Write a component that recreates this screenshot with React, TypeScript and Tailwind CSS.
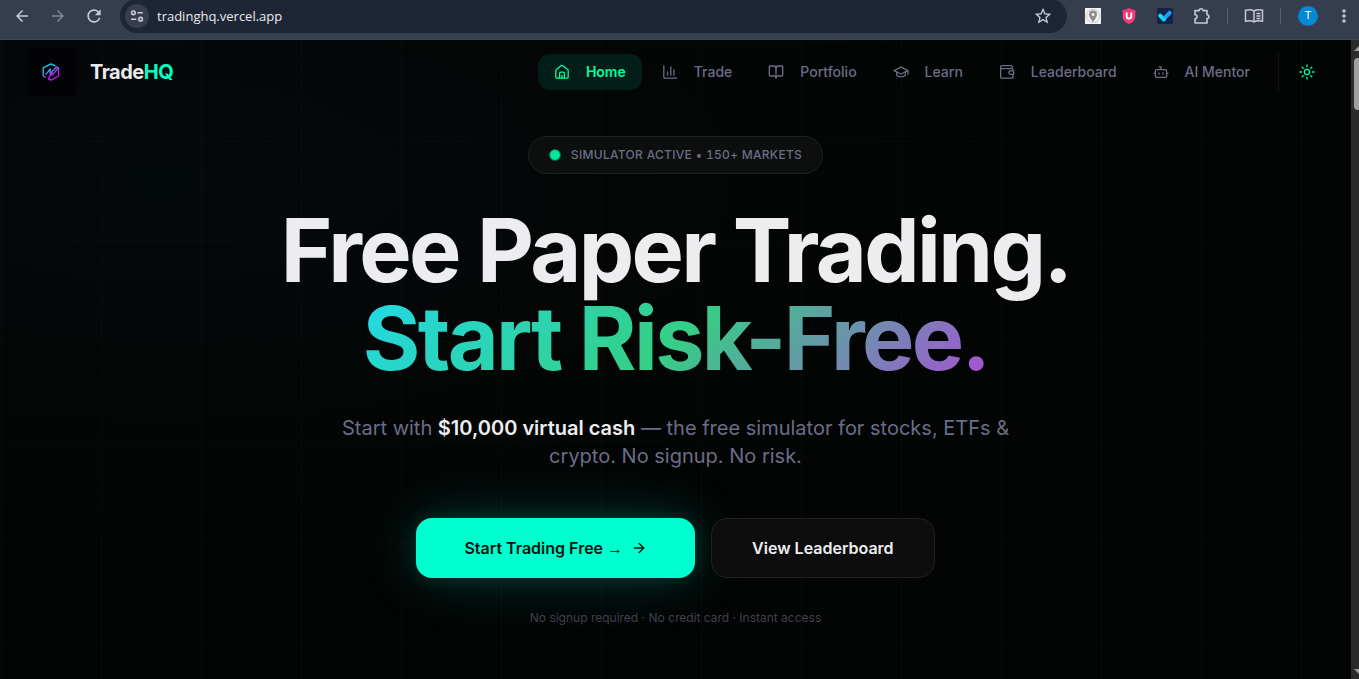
import React from 'react';
import { ArrowRight, BookOpen } from 'lucide-react';
import { MdArrowBack, MdArrowForward, MdMoreVert, MdRefresh, MdStarBorder } from 'react-icons/md';

type IconProps = { children: React.ReactNode };

function NavIcon({ children }: IconProps) {
  return (
    <svg
      viewBox="0 0 16 16"
      className="w-4 h-4 shrink-0"
      fill="none"
      stroke="currentColor"
      strokeWidth="1.3"
      strokeLinecap="round"
      strokeLinejoin="round"
    >
      {children}
    </svg>
  );
}

const navItems = [
  {
    label: 'Home',
    active: true,
    icon: (
      <NavIcon>
        <path d="M1.8 6.6a1.6 1.6 0 0 1 .6-1.2L7 1.8a1.6 1.6 0 0 1 2 0l4.6 3.6a1.6 1.6 0 0 1 .6 1.2V13a1.2 1.2 0 0 1-1.2 1.2H3A1.2 1.2 0 0 1 1.8 13Z" />
        <path d="M5.6 14V9.6A1.4 1.4 0 0 1 7 8.2h2a1.4 1.4 0 0 1 1.4 1.4V14M8 11.4V14" />
      </NavIcon>
    ),
  },
  {
    label: 'Trade',
    icon: (
      <NavIcon>
        <path d="M1.8 1.8v11a1.4 1.4 0 0 0 1.4 1.4h11.4" />
        <path d="M5.6 11.2V7.8M8.8 11.2V3M12 11.2V6" />
      </NavIcon>
    ),
  },
  { label: 'Portfolio', icon: <BookOpen className="w-4 h-4 shrink-0" strokeWidth={2} /> },
  {
    label: 'Learn',
    icon: (
      <NavIcon>
        <path d="M8 3.2 1 6.6 8 10l7-3.4Z" />
        <path d="M3.6 8v3.2c1.8 2.2 7 2.2 8.8 0V8M15 6.8v3.4" />
      </NavIcon>
    ),
  },
  {
    label: 'Leaderboard',
    icon: (
      <NavIcon>
        <path d="M13.2 4.6V2.8a1.2 1.2 0 0 0-1.2-1.2H2.8a1.2 1.2 0 0 0-1.2 1.2v10a1.4 1.4 0 0 0 1.4 1.4h10a1 1 0 0 0 1-1v-2.6" />
        <path d="M1.8 4.6H13a1 1 0 0 1 1 1v1.2M14.6 6.8h-3a1.8 1.8 0 0 0 0 3.6h3Z" />
      </NavIcon>
    ),
  },
  {
    label: 'AI Mentor',
    icon: (
      <NavIcon>
        <path d="M3.6 5.6h8.8a1.2 1.2 0 0 1 1.2 1.2v5.4a1.2 1.2 0 0 1-1.2 1.2H3.6a1.2 1.2 0 0 1-1.2-1.2V6.8a1.2 1.2 0 0 1 1.2-1.2ZM8 5.6V2.8H6M1 9.4h1.2M13.8 9.4H15M6 8.8v1.4M10 8.8v1.4" />
      </NavIcon>
    ),
  },
];

function BrowserBar() {
  return (
    <div className="flex items-center h-10 shrink-0 pb-2 bg-[#353d4f] text-[#c5cad6] border-b border-[#3f485b]">
      <div className="flex items-center gap-4 pl-3">
        <button aria-label="Back" className="w-5 h-8 flex items-center justify-center"><MdArrowBack className="w-[18px] h-[18px]" /></button>
        <button aria-label="Forward" className="w-5 h-8 flex items-center justify-center text-[#7e8697]"><MdArrowForward className="w-[18px] h-[18px]" /></button>
        <button aria-label="Reload" className="w-5 h-8 flex items-center justify-center"><MdRefresh className="w-5 h-5" /></button>
      </div>
      <div className="flex-1 flex items-center h-[34px] ml-4 pl-1 pr-3.5 rounded-full bg-[#1e2635]">
        <button aria-label="Site information" className="w-6 h-6 ml-px rounded-full bg-[#353d4f] flex items-center justify-center">
          <svg viewBox="0 0 14 14" className="w-[14px] h-[14px]" fill="none" stroke="currentColor" strokeWidth="1.6">
            <circle cx="3.4" cy="3.8" r="1.8" />
            <path d="M7.4 3.8h5.4M1 10.2h5.4" />
            <circle cx="10.6" cy="10.2" r="1.8" />
          </svg>
        </button>
        <input
          aria-label="Address"
          defaultValue="tradinghq.vercel.app"
          className="flex-1 min-w-0 h-6 ml-2 bg-transparent outline-none text-[13px] leading-6 text-[#e8ebf1] font-['Open_Sans','Noto_Sans',sans-serif]"
        />
        <button aria-label="Bookmark this page"><MdStarBorder className="w-5 h-5" /></button>
      </div>
      <div className="flex items-center pl-4 pr-[5px]">
        <button aria-label="Location extension" className="w-4 h-4 ml-0.5 bg-[#f3f3f3] flex items-center justify-center">
          <svg viewBox="0 0 16 16" className="w-4 h-4">
            <circle cx="8" cy="8" r="6.6" fill="none" stroke="#c9c9c9" />
            <path d="M8 14C5.6 10.6 4 9 4 6.6a4 4 0 0 1 8 0C12 9 10.4 10.6 8 14Z" fill="#8b8b8b" />
            <circle cx="8" cy="6.5" r="1.5" fill="#f3f3f3" />
          </svg>
        </button>
        <button aria-label="Shield extension" className="ml-5">
          <svg viewBox="0 0 16 16" className="w-4 h-4">
            <path d="M8 0c2 1.3 4 1.9 6.4 2v6c0 4-2.6 6.6-6.4 8-3.8-1.4-6.4-4-6.4-8V2C4 1.9 6 1.3 8 0Z" fill="#ee3d78" />
            <path d="M5.7 4.5v3.8a2.3 2.3 0 0 0 4.6 0V4.5" fill="none" stroke="#fff" strokeWidth="1.8" />
          </svg>
        </button>
        <button aria-label="Tasks extension" className="ml-5">
          <svg viewBox="0 0 16 16" className="w-4 h-4">
            <rect width="16" height="16" rx="1" fill="#14234a" />
            <path d="m3.2 7.6 3.4 3.6" stroke="#16e0e8" strokeWidth="4" strokeLinecap="round" />
            <path d="m6.6 11.2 6-6.4" stroke="#1e9bff" strokeWidth="4" strokeLinecap="round" />
            <path d="m6.2 11 .8.2" stroke="#16d0f0" strokeWidth="4" strokeLinecap="round" />
          </svg>
        </button>
        <button aria-label="Extensions" className="ml-5">
          <svg viewBox="0 0 18 18" className="w-[18px] h-[18px]" fill="none" stroke="currentColor" strokeWidth="1.6" strokeLinejoin="round">
            <path d="M2 3.6h4.2a1.9 1.9 0 0 1 3.8 0h4v4.2a1.9 1.9 0 0 1 0 3.8V16H2v-4.2a2 2 0 0 0 0-4Z" />
          </svg>
        </button>
        <span className="w-px h-4 ml-4 bg-[#566075]" />
        <button aria-label="Reading list" className="ml-4">
          <svg viewBox="0 0 20 16" className="w-5 h-4" fill="none" stroke="currentColor" strokeWidth="1.5">
            <path d="M10 3C8 1.6 4 1.6 1.5 2.2v11C4 12.6 8 12.6 10 14c2-1.4 6-1.4 8.5-.8v-11C16 1.6 12 1.6 10 3Zm0 0v11M12.4 5.4h4M12.4 7.9h4M12.4 10.4h4" />
          </svg>
        </button>
        <span className="w-px h-4 ml-4 bg-[#566075]" />
        <button aria-label="Profile" className="w-5 h-5 ml-[17px] rounded-full bg-[#0588d6] text-white text-[11px] flex items-center justify-center">T</button>
        <button aria-label="Menu" className="ml-4"><MdMoreVert className="w-5 h-5" /></button>
      </div>
    </div>
  );
}

function Logo() {
  return (
    <a href="#" className="flex items-center gap-3.5">
      <span className="w-12 h-12 pr-0.5 flex items-center justify-center bg-[#030305]">
        <svg viewBox="0 0 18 18" className="w-[18px] h-[18px]" fill="none" strokeWidth="1.4" strokeLinejoin="round">
          <defs>
            <linearGradient id="logo" x1="3" y1="1" x2="13" y2="17" gradientUnits="userSpaceOnUse">
              <stop offset="0.3" stopColor="#19c8e6" />
              <stop offset="0.7" stopColor="#b31be8" />
            </linearGradient>
          </defs>
          <g stroke="url(#logo)">
            <path d="M13.4 3 9 .9 1.2 4.8v8l2.6 1.6M6 15.8l3 1.4 7.6-4.2V5l-1.4-.8" />
            <path d="M3.8 11.6 8.2 6v4.600l6.800-7M16.200 5 10 12.400V8.600L6.400 16" />
          </g>
        </svg>
      </span>
      <span className="text-xl font-bold tracking-tight text-[#ebebef]">
        Trade<span className="text-[#00ffc3]">HQ</span>
      </span>
    </a>
  );
}

function Navbar() {
  return (
    <nav className="flex items-center justify-between h-16 px-7">
      <Logo />
      <div className="flex items-center gap-3">
        <div className="flex items-center gap-1">
          {navItems.map((item) => (
            <a
              key={item.label}
              href="#"
              className={
                item.active
                  ? 'flex items-center gap-4 h-9 px-4 rounded-xl text-sm font-semibold bg-[#031e18] text-[#00ffa3]'
                  : 'flex items-center gap-4 h-9 px-4 rounded-xl text-sm font-medium text-[#6b6d88]'
              }
            >
              {item.icon}
              {item.label}
            </a>
          ))}
        </div>
        <span className="w-px h-10 bg-[#141416]" />
        <button aria-label="Toggle theme" className="w-8 h-8 flex items-center justify-center text-[#00ffa3]">
          <NavIcon>
            <circle cx="8" cy="8" r="2.6" />
            <path d="M8 1v1.6M8 13.4V15M1 8h1.6M13.4 8H15M3.2 3.2l1 1M11.8 11.8l1 1M3.2 12.8l1-1M11.8 4.2l1-1" />
          </NavIcon>
        </button>
      </div>
    </nav>
  );
}

function Hero() {
  return (
    <section className="flex flex-col items-center px-6 pt-8 text-center">
      <div className="flex items-center gap-2.5 px-5 h-[38px] rounded-full border border-[#1f2122] bg-[#0d0e0e] text-xs font-medium tracking-wide tabular-nums text-[#6b6d88]">
        <span className="w-3 h-3 rounded-full bg-[#00e696] border border-[#06633f]" />
        SIMULATOR ACTIVE • 150+ MARKETS
      </div>

      <h1 className="mt-8 text-[88px] leading-[88px] font-bold tracking-[-0.03em] text-[#ededf0]">
        Free Paper Trading.
        <br />
        <span className="inline-block bg-linear-135/srgb from-[#22d9e6] via-[#34cf85] to-[#a84fd6] bg-clip-text text-transparent">
          Start Risk-Free.
        </span>
      </h1>

      <p className="mt-8 max-w-2xl text-xl leading-7 text-[#6b6d88]">
        Start with <strong className="font-semibold text-[#ededf0]">$10,000 virtual cash</strong> — the free simulator for
        stocks, ETFs &amp; crypto. No signup. No risk.
      </p>

      <div className="flex gap-4 mt-12">
        <button className="flex items-center gap-2 h-[60px] px-12 rounded-2xl bg-[#00ffcf] text-base font-semibold text-[#04120f] shadow-[0_0_20px_rgba(0,255,208,0.12),0_0_60px_rgba(0,255,208,0.2)]">
          <span>
            Start Trading Free <span className="font-normal font-['Liberation_Sans',sans-serif]">→</span>
          </span>
          <ArrowRight className="w-4 h-4" />
        </button>
        <button className="h-[60px] px-10 rounded-2xl border border-[#1f2021] bg-[#0d0d0e] text-base font-semibold text-[#ededf0]">
          View Leaderboard
        </button>
      </div>

      <p className="mt-8 text-xs leading-4 text-[#40404c]">No signup required · No credit card · Instant access</p>
    </section>
  );
}

export default function App() {
  return (
    <div className="flex flex-col h-screen overflow-hidden bg-[#030404] font-['Inter',sans-serif]">
      <BrowserBar />
      <div className="flex flex-1 min-h-0">
        <main className="flex-1 min-w-0 overflow-hidden bg-[linear-gradient(to_right,rgba(255,255,255,0.02)_1px,transparent_1px),linear-gradient(to_bottom,rgba(255,255,255,0.016)_1px,transparent_1px),radial-gradient(ellipse_at_12%_22%,#04090a_0%,#040606_30%,#030404_50%)] bg-size-[100px_100px,100px_100px,100%_100%] bg-position-[1px_1px,1px_1px,0_0]">
          <Navbar />
          <Hero />
        </main>
        <div className="flex flex-col items-center justify-between w-2 bg-[#2b2b2b] overflow-hidden">
          <div className="w-full">
            <svg viewBox="0 0 8 18" className="w-2 h-[18px]"><path d="M3 11 8 6v5Z" fill="#9f9f9f" /></svg>
            <div className="ml-[3px] h-[52px] rounded-l bg-[#9f9f9f]" />
          </div>
          <svg viewBox="0 0 8 12" className="w-2 h-3"><path d="M3 2h5v5Z" fill="#9f9f9f" /></svg>
        </div>
      </div>
    </div>
  );
}
